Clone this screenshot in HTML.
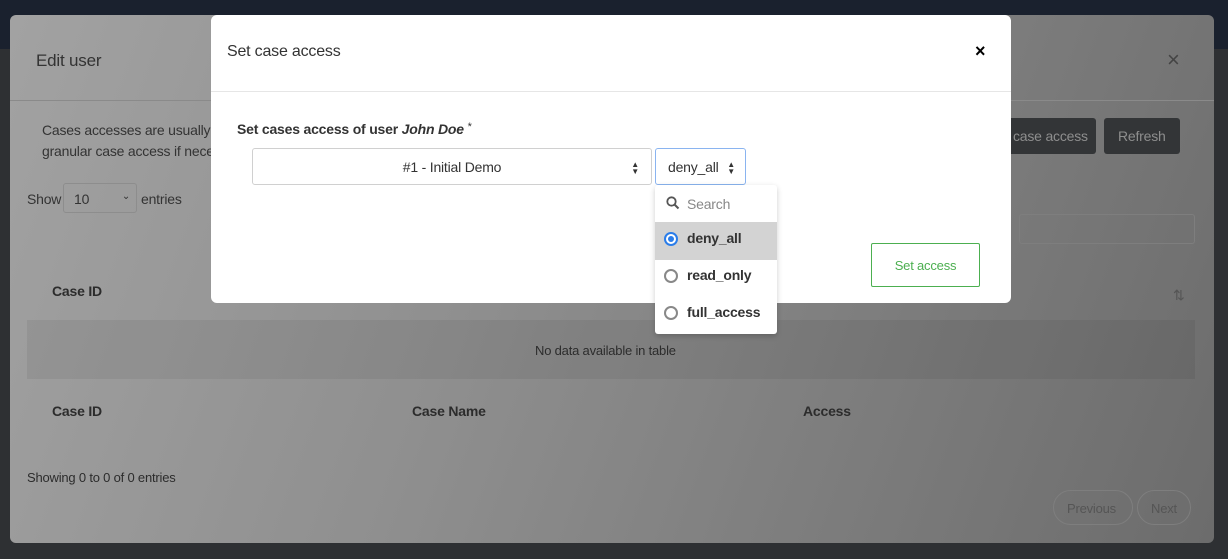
<!DOCTYPE html>
<html><head><style>
*{box-sizing:border-box;margin:0;padding:0}
body{width:1228px;height:559px;overflow:hidden;position:relative;background:#2e3033;font-family:"Liberation Sans",sans-serif;letter-spacing:-0.2px}
.top{position:absolute;left:0;top:0;width:1228px;height:49px;background:#1a212e}
.back{position:absolute;left:10px;top:15px;width:1204px;height:528px;border-radius:6px;background:linear-gradient(110deg,#a2a2a2 0%,#8f8f8f 40%,#6c6c6c 100%);color:#2c2c2c}
.back .t{position:absolute;font-size:14px}
.front{position:absolute;left:211px;top:15px;width:800px;height:288px;background:#fff;border-radius:6px}
</style></head><body>
<div class="top"></div>
<div class="back">
 <div class="t" style="left:26px;top:36px;font-size:17px;color:#333">Edit user</div>
 <div style="position:absolute;left:0;top:85px;width:1204px;height:1px;background:#8a8a8a"></div>
 <div style="position:absolute;left:1157px;top:32px;font-size:22px;color:#444">×</div>
 <div class="t" style="left:32px;top:105px;line-height:21px;color:#333">Cases accesses are usually i<br>granular case access if neces</div>
 <div class="t" style="left:17px;top:176px;color:#333">Show</div>
 <div style="position:absolute;left:53px;top:168px;width:74px;height:30px;border:1px solid #8d8d8d;border-radius:3px;font-size:14px;padding:7px 0 0 10px;color:#333">10<span style="position:absolute;right:6px;top:7px;font-size:10px">⌄</span></div>
 <div class="t" style="left:131px;top:176px;color:#333">entries</div>
 <div style="position:absolute;left:985px;top:103px;width:101px;height:36px;background:#333537;border-radius:3px;color:#8e8e8e;font-size:14px;padding:10px 0 0 18px;">case access</div>
 <div style="position:absolute;left:1094px;top:103px;width:76px;height:36px;background:#333537;border-radius:3px;color:#8e8e8e;font-size:14px;padding:10px 0 0 14px;">Refresh</div>
 <div style="position:absolute;left:1009px;top:199px;width:176px;height:30px;border:1px solid #7e7e7e;border-radius:3px"></div>
 <div class="t" style="left:42px;top:268px;font-weight:bold">Case ID</div>
 <div class="t" style="left:1163px;top:272px;color:#555">⇅</div>
 <div style="position:absolute;left:17px;top:305px;width:1168px;height:59px;background:rgba(0,0,0,0.06)"></div>
 <div class="t" style="left:525px;top:328px;font-size:13px">No data available in table</div>
 <div class="t" style="left:42px;top:388px;font-weight:bold">Case ID</div>
 <div class="t" style="left:402px;top:388px;font-weight:bold">Case Name</div>
 <div class="t" style="left:793px;top:388px;font-weight:bold">Access</div>
 <div class="t" style="left:17px;top:455px;font-size:13px">Showing 0 to 0 of 0 entries</div>
 <div style="position:absolute;left:1043px;top:475px;width:80px;height:35px;border:1px solid #7e7e7e;border-radius:18px;font-size:13px;color:#555;padding:10px 0 0 13px">Previous</div>
 <div style="position:absolute;left:1127px;top:475px;width:54px;height:35px;border:1px solid #7e7e7e;border-radius:18px;font-size:13px;color:#555;padding:10px 0 0 13px">Next</div>
</div>
<div class="front">
 <div style="position:absolute;left:16px;top:28px;font-size:16px;color:#333">Set case access</div>
 <div style="position:absolute;left:764px;top:26px;font-size:18px;font-weight:bold;color:#000">×</div>
 <div style="position:absolute;left:0;top:76px;width:800px;height:1px;background:#e6e6e6"></div>
 <div style="position:absolute;left:26px;top:106px;font-size:14px;font-weight:bold;color:#333">Set cases access of user <i>John Doe</i> <span style="font-weight:normal;font-size:11px;vertical-align:top">*</span></div>
 <div style="position:absolute;left:41px;top:133px;width:400px;height:37px;border:1px solid #d0d0d0;border-radius:3px;text-align:center;font-size:14px;color:#333;padding-top:10px">#1 - Initial Demo<span style="position:absolute;right:12px;top:12px;font-size:8px;line-height:7px">▲<br>▼</span></div>
 <div style="position:absolute;left:444px;top:133px;width:91px;height:37px;border:1px solid #8ab4f0;border-radius:3px;font-size:14px;color:#333;padding:10px 0 0 12px">deny_all<span style="position:absolute;right:10px;top:12px;font-size:8px;line-height:7px">▲<br>▼</span></div>
 <div style="position:absolute;left:660px;top:228px;width:109px;height:44px;border:1px solid #4caf50;border-radius:2px;color:#4caf50;font-size:13px;text-align:center;padding-top:14px">Set access</div>
</div>
<div style="position:absolute;left:655px;top:185px;width:122px;height:149px;background:#fff;border-radius:3px;box-shadow:0 2px 6px rgba(0,0,0,.2);font-size:14px;color:#333">
 <svg style="position:absolute;left:11px;top:11px" width="14" height="14" viewBox="0 0 14 14"><circle cx="5.5" cy="5.5" r="4.2" fill="none" stroke="#555" stroke-width="1.8"/><path d="M8.5 8.5L12.5 12.5" stroke="#555" stroke-width="2"/></svg>
 <div style="position:absolute;left:32px;top:11px;color:#888">Search</div>
 <div style="position:absolute;left:0;top:37px;width:122px;height:38px;background:#d3d3d3"></div>
 <div style="position:absolute;left:9px;top:47px;width:14px;height:14px;border-radius:50%;border:2px solid #2b7de9;background:#fff"><div style="margin:2px;width:6px;height:6px;border-radius:50%;background:#2b7de9"></div></div>
 <div style="position:absolute;left:32px;top:45px;font-weight:bold">deny_all</div>
 <div style="position:absolute;left:9px;top:84px;width:14px;height:14px;border-radius:50%;border:2px solid #888"></div>
 <div style="position:absolute;left:32px;top:82px;font-weight:bold">read_only</div>
 <div style="position:absolute;left:9px;top:121px;width:14px;height:14px;border-radius:50%;border:2px solid #888"></div>
 <div style="position:absolute;left:32px;top:119px;font-weight:bold">full_access</div>
</div>
</body></html>
